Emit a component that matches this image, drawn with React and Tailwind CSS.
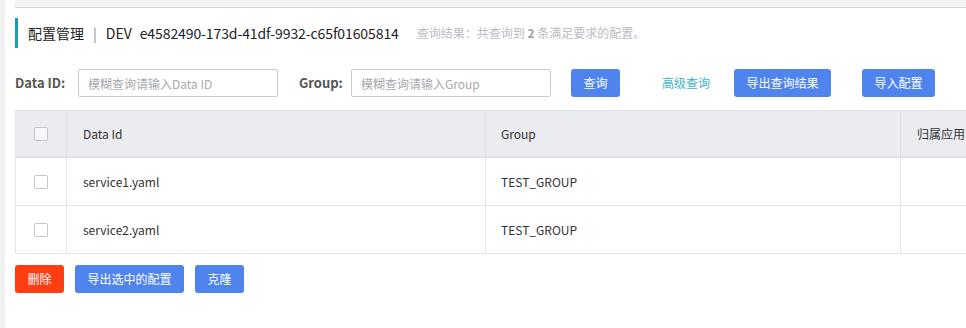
import React from "react";

const font = { fontFamily: '"Noto Sans CJK SC", "Liberation Sans", sans-serif' };

function Checkbox({ header }) {
  return (
    <span
      className={`inline-block w-[14px] h-[14px] border border-[#c4c6cf] rounded-[2px] ${header ? "bg-[#f7f7f9]" : "bg-white"}`}
    />
  );
}

function Btn({ children, className = "" }) {
  return (
    <button className={`h-[28px] px-3 rounded-[3px] text-white text-[12px] leading-none ${className}`}>
      {children}
    </button>
  );
}

const rows = [
  { id: "service1.yaml", group: "TEST_GROUP" },
  { id: "service2.yaml", group: "TEST_GROUP" },
];

export default function App() {
  return (
    <div className="w-[966px] h-[328px] bg-white flex overflow-hidden text-[#333]" style={font}>
      <div className="w-[5px] shrink-0 bg-[#f0f0f0]" />
      <div className="flex-1 min-w-0 pl-[10px]">
        {/* top strip */}
        <div className="h-[8px] bg-[#f4f4f4] border-b border-[#d9d9d9]" />

        {/* title */}
        <div className="mt-[10px] h-[30px] flex items-center border-l-[3px] border-[#1d9aab] pl-[10px]">
          <span className="text-[14px] text-[#222]">配置管理</span>
          <span className="text-[14px] text-[#888] mx-[9px]">|</span>
          <span className="text-[14px] text-[#222]">DEV</span>
          <span className="text-[14px] text-[#222] ml-[8px] tracking-[-0.1px]">e4582490-173d-41df-9932-c65f01605814</span>
          <span className="text-[12px] text-[#b9bcc3] ml-[18px]">
            查询结果：共查询到 <b className="font-bold text-[#9a9da5]">2</b> 条满足要求的配置。
          </span>
        </div>

        {/* filters */}
        <div className="mt-[21px] flex items-center h-[28px]">
          <span className="text-[13px] font-bold text-[#555] w-[63px]">Data ID:</span>
          <input
            className="w-[200px] h-[28px] border border-[#c9cbd1] rounded-[2px] px-[9px] text-[12px] placeholder-[#a7a9ae] outline-none"
            placeholder="模糊查询请输入Data ID"
          />
          <span className="text-[13px] font-bold text-[#555] ml-[21px] w-[52px]">Group:</span>
          <input
            className="w-[200px] h-[28px] border border-[#c9cbd1] rounded-[2px] px-[9px] text-[12px] placeholder-[#a7a9ae] outline-none"
            placeholder="模糊查询请输入Group"
          />
          <Btn className="ml-[20px] w-[49px] bg-[#4f84ef]">查询</Btn>
          <span className="ml-[42px] text-[12px] text-[#3ab4c8]">高级查询</span>
          <Btn className="ml-[24px] w-[97px] bg-[#4f84ef]">导出查询结果</Btn>
          <Btn className="ml-[31px] w-[73px] bg-[#4f84ef]">导入配置</Btn>
        </div>

        {/* table */}
        <div className="mt-[13px] w-[1100px] border-l border-[#e3e4e8] text-[12px]">
          <div className="flex h-[48px] bg-[#ebecf0] border-t border-b-[2px] border-[#dfe0e5] text-[#333]">
            <div className="w-[51px] flex items-center justify-center border-r border-[#dfe0e5]">
              <Checkbox header />
            </div>
            <div className="w-[419px] flex items-center pl-[16px] border-r border-[#dfe0e5]">Data Id</div>
            <div className="w-[415px] flex items-center pl-[15px] border-r border-[#dfe0e5]">Group</div>
            <div className="flex-1 flex items-center pl-[16px]">归属应用</div>
          </div>
          {rows.map((r) => (
            <div key={r.id} className="flex h-[48px] border-b border-[#e3e4e8] bg-white">
              <div className="w-[51px] flex items-center justify-center border-r border-[#e3e4e8]">
                <Checkbox />
              </div>
              <div className="w-[419px] flex items-center pl-[16px] border-r border-[#e3e4e8]">{r.id}</div>
              <div className="w-[415px] flex items-center pl-[15px] border-r border-[#e3e4e8]">{r.group}</div>
              <div className="flex-1" />
            </div>
          ))}
        </div>

        {/* bottom actions */}
        <div className="mt-[11px] flex gap-[11px]">
          <Btn className="w-[49px] bg-[#ff3d13]">删除</Btn>
          <Btn className="w-[109px] bg-[#4f84ef]">导出选中的配置</Btn>
          <Btn className="w-[49px] bg-[#4f84ef]">克隆</Btn>
        </div>
      </div>
    </div>
  );
}
